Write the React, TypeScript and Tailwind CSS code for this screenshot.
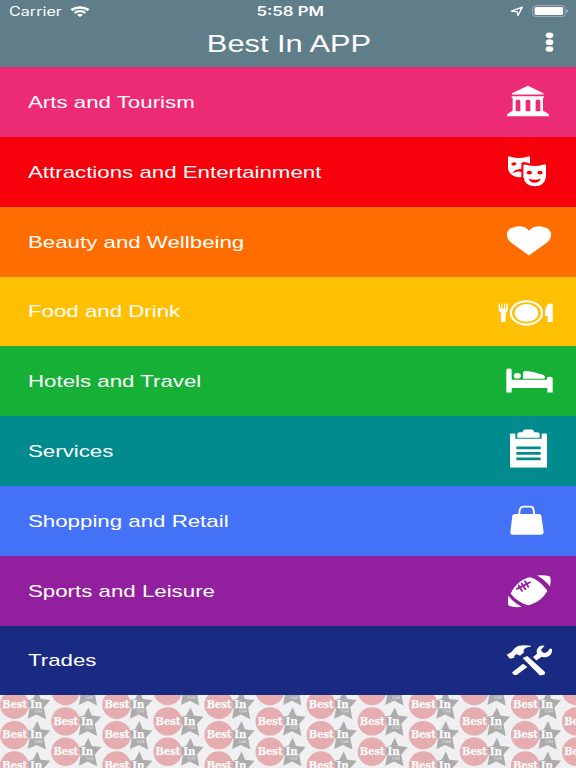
import type { ReactNode } from "react";

function Museum() {
  return (
    <>
      <path d="M114 48 L160 70 V74 H66 V70Z" fill="#fff" />
      <path d="M65 79 H162 V84 H159 V123 L169 128 L177 135 V139 H51 V135 L59 128 L68 123 V84 H65Z" fill="#fff" />
      <g fill="#ed2a74">
        <path d="M77 124 V95 Q77 89 84 89 T91 95 V124Z" />
        <path d="M107 124 V95 Q107 89 114 89 T121 95 V124Z" />
        <path d="M137 124 V95 Q137 89 144 89 T151 95 V124Z" />
      </g>
    </>
  );
}

function Masks() {
  return (
    <>
      <path d="M54 261 Q56 257 62 260 Q86 268 112 260 Q119 257 120 263 V298 Q116 321 89 322 Q72 322 60 309 Q54 302 54 294Z" fill="#fff" />
      <g fill="#f5000b">
        <path d="M63 283 Q71 272 80 281 Q72 292 63 283Z" />
        <path d="M92 281 Q101 273 108 281 Q101 285 92 281Z" />
        <path d="M67 310 Q73 297 96 296 V306 Q80 302 67 310Z" />
        <path d="M94 286 Q95 278 104 276 Q134 288 162 277 Q174 277 174 288 V325 Q168 354 135 354 Q99 353 94 320Z" />
      </g>
      <path d="M100 287 Q101 282 108 284 Q134 292 159 284 Q166 281 168 287 V320 Q164 348 134 349 Q104 347 100 320Z" fill="#fff" />
      <g fill="#f5000b">
        <ellipse cx="118" cy="308" rx="8" ry="5.500" />
        <ellipse cx="150" cy="308" rx="8" ry="5.500" />
        <path d="M116 326 Q134 332 152 326 Q148 338 134 338 T116 326Z" />
      </g>
    </>
  );
}

function Heart() {
  return <path d="M117 136 L62 96 C48 85 46 65 61 55 C77 45 104 44 117 62 C130 44 158 45 173 55 C188 65 186 85 172 96Z" fill="#fff" />;
}

function Dining() {
  return (
    <>
      <path d="M26 280 H30 V294 H34 V279 H37 V294 H42 V279 H45 V294 H49 V280 H54 V295 Q54 304 47 307 V335 H33 V307 Q26 304 26 295Z" fill="#fff" />
      <ellipse cx="109.500" cy="307.500" rx="46.500" ry="35" fill="none" stroke="#fff" strokeWidth="6.500" />
      <ellipse cx="109.500" cy="307.500" rx="35.500" ry="26.500" fill="#fff" />
      <path d="M188 279 V335 H173 V317 H165 Q164 292 173 283 Q178 279 188 279Z" fill="#fff" />
    </>
  );
}

function Bed() {
  return (
    <>
      <path d="M49 62 Q50 58 57 58 T65 62 V92 H171 V87 Q172 83 179 83 T188 87 V130 H172 V117 H65 V130 H49Z" fill="#fff" />
      <ellipse cx="82" cy="80" rx="10.500" ry="8.500" fill="#fff" />
      <path d="M99 89 V70 Q100 66 110 66 Q130 67 150 75 Q163 78 165 82 V87 Q164 89 161 89Z" fill="#fff" />
    </>
  );
}

function Clipboard() {
  return (
    <>
      <path d="M60 253 Q60 251 63 251 H74 Q76 251 76 254 V267 H155 V254 Q155 251 158 251 H168 Q171 251 171 254 V353 H60Z" fill="#fff" />
      <path d="M82 264 V253 Q82 247 89 247 H98 Q99 239 105 239 H126 Q132 239 132 247 H141 Q149 247 149 253 V264Z" fill="#fff" />
      <path d="M79 294 H152 M79 310.500 H152 M79 327 H152" stroke="#028b8e" strokeWidth="8" />
    </>
  );
}

function Bag() {
  return (
    <>
      <path d="M87 76 L89 61 Q91 50 101 50 H121 Q130 50 131 61 L133 76" fill="none" stroke="#fff" strokeWidth="5.500" />
      <path d="M74 72 H147 Q153 72 154 77 L161 127 Q161 134 154 134 H67 Q60 134 61 127 L67 77 Q68 72 74 72Z" fill="#fff" />
    </>
  );
}

function Football() {
  return (
    <>
      <path d="M62 310 C74 284 97 265 119 261 C136 264 158 281 172 302 C160 325 138 341 114 345 C94 341 75 326 62 310Z" fill="#fff" />
      <path d="M141 256 Q163 253 180 259 Q184 270 180 289 Q164 268 141 256Z" fill="#fff" />
      <path d="M55 317 Q70 337 95 350 Q74 353 56 347 Q52 334 55 317Z" fill="#fff" />
      <g stroke="#921f9e" strokeWidth="5.500" strokeLinecap="round">
        <path d="M81 296 L120 276" />
        <path d="M86 286 L96 302" />
        <path d="M95 280 L106 297" />
        <path d="M105 273 L115 290" />
      </g>
    </>
  );
}

function Tools() {
  return (
    <>
      <path d="M50 85 L61 79 L65 76 Q71 65 84 59 Q101 55 123 58 V60 Q108 62 103 68 Q99 72 102 78 L90 88 Q82 82 77 84 L74 88 L72 94 L60 97 Z" fill="#fff" />
      <path d="M98 95 L112 89 L165 137 L164 144 L150 147Z" fill="#fff" />
      <path d="M66 138 L99 112 L112 122 L80 146 Q70 147 66 138Z" fill="#fff" />
      <path d="M129 92 L141 82 Q137 68 148 60 Q155 56 164 58 L153 70 Q154 76 162 80 Q171 80 180 66 L186 68 Q188 82 177 89 Q168 95 155 91 L139 102Z" fill="#fff" />
    </>
  );
}

type Row = { label: string; color: string; view: string; icon: ReactNode };

const rows: Row[] = [
  { label: "Arts and Tourism", color: "bg-[#ed2a74]", view: "0 -8.4 258 209.4", icon: <Museum /> },
  { label: "Attractions and Entertainment", color: "bg-[#f5000b]", view: "0 201 258 209.4", icon: <Masks /> },
  { label: "Beauty and Wellbeing", color: "bg-[#ff6d00]", view: "0 -9.6 258 209.4", icon: <Heart /> },
  { label: "Food and Drink", color: "bg-[#ffc003]", view: "0 199.8 258 209.4", icon: <Dining /> },
  { label: "Hotels and Travel", color: "bg-[#15b035]", view: "0 -9.3 258 209.4", icon: <Bed /> },
  { label: "Services", color: "bg-[#028b8e]", view: "0 198.6 258 209.4", icon: <Clipboard /> },
  { label: "Shopping and Retail", color: "bg-[#4372f7]", view: "0 -12 258 209.4", icon: <Bag /> },
  { label: "Sports and Leisure", color: "bg-[#921f9e]", view: "0 197.4 258 209.4", icon: <Football /> },
  { label: "Trades", color: "bg-[#182a81]", view: "0 -1.2 258 209.4", icon: <Tools /> },
];

function Logo({ x, y }: { x: number; y: number }) {
  return (
    <g transform={`translate(${x} ${y})`}>
      <path d="M22.800 -14 L26.200 -5.800 L35.800 -4.700 L29.200 2.700 L31.500 14.500 L22 9.800 L13.200 14 L15 4 L9 -3.500 L18.400 -5.800Z" fill="#acacad" />
      <ellipse rx="14.400" ry="14.200" fill="#e5adb0" />
      <g fill="#fbfbfb" stroke="#fbfbfb" strokeWidth="0.25" fontFamily="'DejaVu Serif', serif" fontWeight="700" fontSize="10.400">
        <text x="-12.200" y="3.100" textLength="24.800" lengthAdjust="spacingAndGlyphs">Best</text>
        <text x="15.500" y="3.100" textLength="12.200" lengthAdjust="spacingAndGlyphs">In</text>
      </g>
      <rect x="20.200" y="4.600" width="7.400" height="3" fill="#d0d0d1" />
      <text x="20.700" y="7.200" fontFamily="'Liberation Sans', sans-serif" fontSize="3" fill="#a4a4a5" textLength="6.400" lengthAdjust="spacingAndGlyphs">APP</text>
    </g>
  );
}

const columns = Array.from({ length: 12 }, (_, i) => i);

export default function App() {
  return (
    <div className="flex h-[768px] w-[576px] flex-col overflow-hidden bg-[#f0f0f2] font-['Liberation_Sans',Arial,sans-serif] text-white">
      <header className="flex h-[67.2px] shrink-0 flex-col bg-[#607d8a]">
        <div className="grid h-[22px] grid-cols-3 items-center font-[Inter,sans-serif] leading-none">
          <div className="flex items-center pl-[9px]">
            <span className="w-[61px] pt-[2px] text-[12.5px]">
              <span className="inline-block origin-left scale-x-[1.29]">Carrier</span>
            </span>
            <svg className="h-[11px] w-[20px]" viewBox="0 0 60 33">
              <path d="M1 9 Q30 -8 59 9 L53 15 Q30 1 7 15Z M11 18 Q30 6 49 18 L43 23 Q30 15 17 23Z M21 26 Q30 21 39 26 L30 33Z" fill="#fff" />
            </svg>
          </div>
          <div className="pt-[2px] pl-[4px] text-center text-[12.5px] font-semibold">
            <span className="inline-block scale-x-[1.34]">5:58 PM</span>
          </div>
          <div className="flex items-center justify-end gap-[8px] pr-[7px]">
            <svg className="h-[11px] w-[14px]" viewBox="0 0 42 33">
              <path d="M4 15.500 L37 3.500 L24 28 L21.500 17.500Z" fill="none" stroke="#fff" strokeWidth="4" strokeLinejoin="round" />
            </svg>
            <svg className="h-[12px] w-[37px]" viewBox="0 0 111 36">
              <rect x="2" y="1.500" width="97" height="33" rx="8" fill="none" stroke="#a6b6be" strokeWidth="2.500" />
              <rect x="8" y="6" width="85" height="24" rx="4" fill="#fff" />
              <path d="M103 13 Q109 15 109 18 T103 24Z" fill="#a6b6be" />
            </svg>
          </div>
        </div>
        <div className="grid h-[42px] grid-cols-[1fr_auto_1fr] items-center">
          <span />
          <h1 className="scale-x-[1.31] pt-[3px] pl-[2px] text-[23.5px] leading-none">Best In APP</h1>
          <svg className="mr-[22px] h-[20px] w-[9px] justify-self-end overflow-visible" viewBox="0 0 27 60">
            <g fill="#fff">
              <ellipse cx="13.500" cy="7" rx="11.500" ry="8.500" />
              <ellipse cx="13.500" cy="27.500" rx="11.500" ry="8.500" />
              <ellipse cx="13.500" cy="48" rx="11.500" ry="8.500" />
            </g>
          </svg>
        </div>
      </header>

      <main className="shrink-0">
        {rows.map((row) => (
          <div key={row.label} className={`flex h-[69.81px] items-center justify-between pl-[28px] ${row.color}`}>
            <span className="origin-left scale-x-[1.31] pt-[1px] text-[17px] leading-none whitespace-nowrap">{row.label}</span>
            <svg className="h-[69.8px] w-[86px] shrink-0" viewBox={row.view}>
              {row.icon}
            </svg>
          </div>
        ))}
      </main>

      <footer className="min-h-0 flex-1 overflow-hidden">
        <svg className="h-[73px] w-[576px]" viewBox="0 695.6 576 73">
          {columns.map((c) =>
            [0, 1, 2].map((r) => (
              <Logo key={`${c}-${r}`} x={14.5 + c * 51.08} y={(c % 2 ? 691.6 : 705.3) + r * 30.4} />
            )),
          )}
        </svg>
      </footer>
    </div>
  );
}
